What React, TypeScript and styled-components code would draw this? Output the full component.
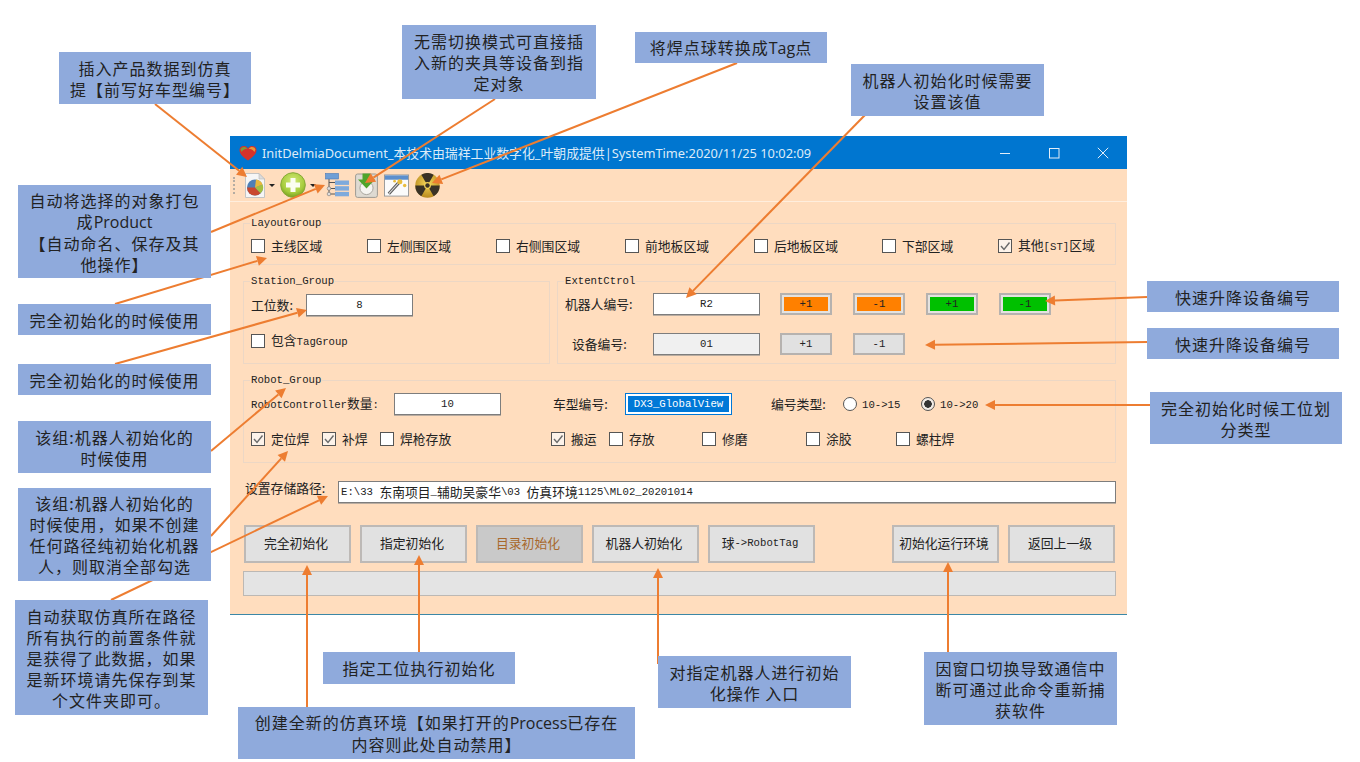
import React from "react";
import styled, { createGlobalStyle } from "styled-components";

const ORANGE = "#ED7D31";

type Note = { x: number; y: number; w: number; h: number; lines: string[] };

const notes: Note[] = [
    { x: 59, y: 52, w: 192, h: 52, lines: ["插入产品数据到仿真", "提【前写好车型编号】"] },
    { x: 402, y: 25, w: 194, h: 74, lines: ["无需切换模式可直接插", "入新的夹具等设备到指", "定对象"] },
    { x: 635, y: 32, w: 192, h: 31, lines: ["将焊点球转换成Tag点"] },
    { x: 851, y: 64, w: 193, h: 52, lines: ["机器人初始化时候需要", "设置该值"] },
    { x: 18, y: 185, w: 193, h: 93, lines: ["自动将选择的对象打包", "成Product", "【自动命名、保存及其", "他操作】"] },
    { x: 18, y: 304, w: 193, h: 31, lines: ["完全初始化的时候使用"] },
    { x: 18, y: 364, w: 193, h: 31, lines: ["完全初始化的时候使用"] },
    { x: 18, y: 421, w: 193, h: 52, lines: ["该组:机器人初始化的", "时候使用"] },
    { x: 18, y: 488, w: 193, h: 93, lines: ["该组:机器人初始化的", "时候使用，如果不创建", "任何路径纯初始化机器", "人，则取消全部勾选"] },
    { x: 15, y: 600, w: 193, h: 115, lines: ["自动获取仿真所在路径", "所有执行的前置条件就", "是获得了此数据，如果", "是新环境请先保存到某", "个文件夹即可。"] },
    { x: 323, y: 652, w: 192, h: 32, lines: ["指定工位执行初始化"] },
    { x: 238, y: 707, w: 397, h: 52, lines: ["创建全新的仿真环境【如果打开的Process已存在", "内容则此处自动禁用】"] },
    { x: 658, y: 656, w: 193, h: 52, lines: ["对指定机器人进行初始", "化操作 入口"] },
    { x: 924, y: 652, w: 193, h: 73, lines: ["因窗口切换导致通信中", "断可通过此命令重新捕", "获软件"] },
    { x: 1147, y: 281, w: 192, h: 31, lines: ["快速升降设备编号"] },
    { x: 1147, y: 328, w: 192, h: 31, lines: ["快速升降设备编号"] },
    { x: 1150, y: 392, w: 192, h: 52, lines: ["完全初始化时候工位划", "分类型"] },
];

// x1, y1 -> tip x2, y2
const arrows = [
    [155, 104, 247, 177],
    [495, 99, 365, 183],
    [737, 63, 432, 183],
    [865, 115, 686, 298],
    [211, 232, 325, 185],
    [115, 304, 267, 258],
    [115, 364, 307, 310],
    [211, 451, 286, 388],
    [211, 536, 288, 451],
    [111, 600, 328, 496],
    [419, 652, 419, 555],
    [307, 707, 307, 565],
    [658, 664, 658, 568],
    [948, 654, 948, 562],
    [1147, 297, 1045, 301],
    [1147, 342, 925, 345],
    [1150, 405, 985, 405],
];

// latin runs are half width like the old SimSun font, so they get a smaller size
const Txt = ({ t }: { t: string }) => (
    <>
        {t.split(/([\u0000-\u00ff]+)/).map((part, i) =>
            /^[\u0000-\u00ff]+$/.test(part) ? <Latin key={i}>{part}</Latin> : part
        )}
    </>
);

// callout text is spaced out, latin words in it are not
const NoteLine = ({ t }: { t: string }) => (
    <div>
        {t.split(/([A-Za-z]+)/).map((part, i) =>
            /^[A-Za-z]+$/.test(part) ? <NoteWord key={i}>{part}</NoteWord> : part
        )}
    </div>
);

const Arrow = ({ a }: { a: number[] }) => {
    const [x1, y1, x2, y2] = a;
    const len = Math.hypot(x2 - x1, y2 - y1);
    const ux = (x2 - x1) / len;
    const uy = (y2 - y1) / len;
    const bx = x2 - ux * 10;
    const by = y2 - uy * 10;
    const head = `${x2},${y2} ${bx - uy * 5},${by + ux * 5} ${bx + uy * 5},${by - ux * 5}`;
    return (
        <>
            <line x1={x1} y1={y1} x2={bx} y2={by} stroke={ORANGE} strokeWidth={2} />
            <polygon points={head} fill={ORANGE} />
        </>
    );
};

const Check = ({ label, on, w }: { label: string; on?: boolean; w?: number }) => (
    <CheckItem $w={w}>
        <CheckBox $on={on}>
            {on && (
                <svg width="12" height="12" viewBox="0 0 12 12">
                    <path d="M2 6 L5 9.5 L10.5 2.5" fill="none" stroke="#6a6a6a" strokeWidth="1.4" />
                </svg>
            )}
        </CheckBox>
        <span><Txt t={label} /></span>
    </CheckItem>
);

const Radio = ({ label, on, w }: { label: string; on?: boolean; w: number }) => (
    <CheckItem $w={w}>
        <RadioDot $on={on} />
        <span><Txt t={label} /></span>
    </CheckItem>
);

const HeartIcon = () => (
    <svg width="18" height="16" viewBox="0 0 18 16">
        <path d="M9 15.5 C4 12 .5 9 .5 5 C.5 2 3 .5 5.5 1 C7 1.3 8.3 2.2 9 3.4 C9.7 2.2 11 1.3 12.5 1 C15 .5 17.5 2 17.5 5 C17.5 9 14 12 9 15.5Z" fill="#d5322a" />
        <path d="M1.5 4.5 C3 1.5 6 1.4 8.4 3.8 C6 3.8 4 4.8 2.6 7Z" fill="#7f9a3a" />
        <path d="M16.5 4.5 C15 1.5 12 1.4 9.6 3.8 C12 3.8 14 4.8 15.4 7Z" fill="#e79a3a" />
    </svg>
);

const PieDocIcon = () => (
    <svg width="20" height="25" viewBox="0 0 20 25">
        <path d="M.5 .5 H14 L19.5 6 V24.5 H.5Z" fill="#f6f6f6" stroke="#c4c4c4" />
        <path d="M14 .5 V6 H19.5Z" fill="#dcdcdc" stroke="#b8b8b8" strokeWidth=".6" />
        <circle cx="10" cy="14.5" r="8" fill="#4f7fb5" />
        <path d="M10 14.5 L2 14.5 A8 8 0 0 0 10 22.5 A8 8 0 0 0 15.5 20.3Z" fill="#c9472f" />
        <path d="M10 14.5 L15.5 20.3 A8 8 0 0 0 17.6 11.5Z" fill="#a5c03f" />
        <path d="M10 14.5 L17.6 11.5 A8 8 0 0 0 11 6.6Z" fill="#e8b93c" />
    </svg>
);

const PlusIcon = () => (
    <svg width="26" height="26" viewBox="0 0 26 26">
        <defs>
            <radialGradient id="plusFill" cx="50%" cy="35%" r="65%">
                <stop offset="0%" stopColor="#d4ea7a" />
                <stop offset="70%" stopColor="#a6cc3c" />
                <stop offset="100%" stopColor="#78a022" />
            </radialGradient>
        </defs>
        <circle cx="13" cy="13" r="12.3" fill="url(#plusFill)" stroke="#86a838" />
        <path d="M10.5 6 H15.5 V10.5 H20 V15.5 H15.5 V20 H10.5 V15.5 H6 V10.5 H10.5Z" fill="#fbfdf0" />
    </svg>
);

const TreeIcon = () => (
    <svg width="24" height="24" viewBox="0 0 24 24">
        <path d="M4 6 V21 H10 M4 9.5 H10 M4 15.5 H10" fill="none" stroke="#555" strokeWidth="1" />
        <rect x=".5" y=".5" width="13" height="5.5" fill="#6f9fd6" stroke="#4a79b5" strokeWidth=".6" />
        <rect x="10" y="7.5" width="14" height="4.4" fill="#7eaadc" />
        <rect x="10" y="13.2" width="14" height="4.4" fill="#7eaadc" />
        <rect x="10" y="18.9" width="14" height="4.4" fill="#7eaadc" />
        <circle cx="4" cy="15.5" r="1.8" fill="#ddd" stroke="#777" strokeWidth=".6" />
        <circle cx="4" cy="21" r="1.8" fill="#ddd" stroke="#777" strokeWidth=".6" />
    </svg>
);

const SaveIcon = () => (
    <svg width="23" height="25" viewBox="0 0 23 25">
        <rect x=".6" y="1" width="21.8" height="23.4" rx="2" fill="#dedad2" stroke="#9d9a92" />
        <circle cx="11.5" cy="15" r="6.6" fill="#f6f5f1" stroke="#aaa79f" />
        <path d="M7.5 .5 H15.5 V6.5 H20 L11.5 15.5 L3 6.5 H7.5Z" fill="#4fa42a" />
    </svg>
);

const WandIcon = () => (
    <svg width="25" height="23" viewBox="0 0 26 23">
        <rect x=".5" y=".5" width="25" height="22" fill="#fbfbfb" stroke="#9a9a9a" />
        <rect x="1" y="1" width="24" height="4.5" fill="#5d8fcc" />
        <path d="M5 20 L15 9" stroke="#555" strokeWidth="3.2" />
        <path d="M5 20 L15 9" stroke="#d8d8d8" strokeWidth="1.2" />
        <circle cx="16.5" cy="7.5" r="2.6" fill="#e9bd3d" />
        <circle cx="21.5" cy="11.5" r="1.8" fill="#e9bd3d" />
        <circle cx="11" cy="7" r="1.4" fill="#e9bd3d" />
    </svg>
);

const RadiationIcon = () => (
    <svg width="25" height="25" viewBox="0 0 25 25">
        <defs>
            <radialGradient id="radFill" cx="50%" cy="40%" r="60%">
                <stop offset="0%" stopColor="#f5d75a" />
                <stop offset="100%" stopColor="#b98a1e" />
            </radialGradient>
        </defs>
        <circle cx="12.5" cy="12.5" r="12.2" fill="url(#radFill)" />
        <path d="M12.5 12.5 L6.3 1.8 A12.2 12.2 0 0 1 18.7 1.8Z" fill="#3a3226" />
        <path d="M12.5 12.5 L24.7 12.5 A12.2 12.2 0 0 1 18.7 23.2Z" fill="#3a3226" />
        <path d="M12.5 12.5 L6.3 23.2 A12.2 12.2 0 0 1 .3 12.5Z" fill="#3a3226" />
        <circle cx="12.5" cy="12.5" r="3.4" fill="#f2d257" />
        <circle cx="12.5" cy="12.5" r="2.2" fill="#3a3226" />
    </svg>
);

export default function App() {
    return (
        <Page>
            <GlobalStyle />

            <Window>
                <TitleBar>
                    <HeartIcon />
                    <TitleText>InitDelmiaDocument_本技术由瑞祥工业数字化_叶朝成提供|SystemTime:2020/11/25 10:02:09</TitleText>
                    <WinButton>
                        <svg width="12" height="12" viewBox="0 0 12 12"><path d="M1 6.5 H11" stroke="#e4eef8" /></svg>
                    </WinButton>
                    <WinButton>
                        <svg width="12" height="12" viewBox="0 0 12 12"><rect x="1.5" y="1.5" width="9.5" height="9.5" fill="none" stroke="#e4eef8" /></svg>
                    </WinButton>
                    <WinButton>
                        <svg width="12" height="12" viewBox="0 0 12 12"><path d="M.8 .8 L11.2 11.2 M11.2 .8 L.8 11.2" stroke="#e4eef8" /></svg>
                    </WinButton>
                </TitleBar>

                <Toolbar>
                    <Grip />
                    <PieDocIcon />
                    <Caret />
                    <PlusIcon />
                    <Caret $right={3} />
                    <TreeIcon />
                    <SaveIcon />
                    <WandIcon />
                    <RadiationIcon />
                </Toolbar>

                <Body>
                    <Group $h={42} $pad={11}>
                        <Legend>LayoutGroup</Legend>
                        <Row>
                            <Check label="主线区域" w={116} />
                            <Check label="左侧围区域" w={129} />
                            <Check label="右侧围区域" w={129} />
                            <Check label="前地板区域" w={129} />
                            <Check label="后地板区域" w={128} />
                            <Check label="下部区域" w={116} />
                            <Check label="其他[ST]区域" on />
                        </Row>
                    </Group>

                    <TwoGroups>
                        <Group $h={83} $w={307}>
                            <Legend>Station_Group</Legend>
                            <Row>
                                <Label $w={55}>工位数:</Label>
                                <TextBox $w={107}><Latin>8</Latin></TextBox>
                            </Row>
                            <Row $top={14}>
                                <Check label="包含TagGroup" />
                            </Row>
                        </Group>

                        <Group $h={83} $grow $pad={11}>
                            <Legend>ExtentCtrol</Legend>
                            <Row>
                                <Label $w={88}>机器人编号:</Label>
                                <TextBox $w={107}><Latin>R2</Latin></TextBox>
                                <StepButton $fill="#FF8000" $left={20}><Latin>+1</Latin></StepButton>
                                <StepButton $fill="#FF8000" $left={21}><Latin>-1</Latin></StepButton>
                                <StepButton $fill="#00C000" $left={21}><Latin>+1</Latin></StepButton>
                                <StepButton $fill="#00C000" $left={21}><Latin>-1</Latin></StepButton>
                            </Row>
                            <Row $top={18}>
                                <Label $w={88} $indent={7}>设备编号:</Label>
                                <TextBox $w={107} $bg="#f0f0f0"><Latin>01</Latin></TextBox>
                                <StepButton $left={20}><Latin>+1</Latin></StepButton>
                                <StepButton $left={21}><Latin>-1</Latin></StepButton>
                            </Row>
                        </Group>
                    </TwoGroups>

                    <Group $h={83}>
                        <Legend>Robot_Group</Legend>
                        <Row>
                            <Label $w={143}><Txt t="RobotController数量:" /></Label>
                            <TextBox $w={107}><Latin>10</Latin></TextBox>
                            <Label $w={72} $left={52}>车型编号:</Label>
                            <SelectedBox><Latin>DX3_GlobalView</Latin></SelectedBox>
                            <Label $w={72} $left={39}>编号类型:</Label>
                            <Radio label="10->15" w={78} />
                            <Radio label="10->20" on w={78} />
                        </Row>
                        <Row $top={13}>
                            <Check label="定位焊" on w={71} />
                            <Check label="补焊" on w={58} />
                            <Check label="焊枪存放" w={171} />
                            <Check label="搬运" on w={58} />
                            <Check label="存放" w={93} />
                            <Check label="修磨" w={104} />
                            <Check label="涂胶" w={90} />
                            <Check label="螺柱焊" />
                        </Row>
                    </Group>

                    <PathRow>
                        <PathLabel>设置存储路径:</PathLabel>
                        <TextBox $grow $left>
                            <Txt t="E:\33 东南项目_辅助吴豪华\03 仿真环境1125\ML02_20201014" />
                        </TextBox>
                    </PathRow>

                    <ActionRow>
                        <ActionButton>完全初始化</ActionButton>
                        <ActionButton>指定初始化</ActionButton>
                        <ActionButton $disabled>目录初始化</ActionButton>
                        <ActionButton>机器人初始化</ActionButton>
                        <ActionButton><Txt t="球->RobotTag" /></ActionButton>
                        <ActionSpacer />
                        <ActionButton>初始化运行环境</ActionButton>
                        <ActionButton>返回上一级</ActionButton>
                    </ActionRow>

                    <ProgressBar />
                </Body>
            </Window>

            <ArrowLayer width="1360" height="762" viewBox="0 0 1360 762">
                {arrows.map((a, i) => <Arrow key={i} a={a} />)}
            </ArrowLayer>

            {notes.map((n, i) => (
                <Callout key={i} $x={n.x} $y={n.y} $w={n.w} $h={n.h}>
                    {n.lines.map((line, j) => <NoteLine key={j} t={line} />)}
                </Callout>
            ))}
        </Page>
    );
}


const GlobalStyle = createGlobalStyle`
    html, body {
        margin: 0;
        padding: 0;
        background: #fff;
    }
    * {
        box-sizing: border-box;
    }
`

const Page = styled.div`
    position: relative;
    width: 1360px;
    height: 762px;
    overflow: hidden;
    background: #fff;
    font-family: "Noto Sans CJK SC", sans-serif;
`

const Window = styled.div`
    position: absolute;
    left: 230px;
    top: 136px;
    width: 897px;
    height: 479px;
    display: flex;
    flex-direction: column;
    background: #FFDDBE;
    border-bottom: 1px solid #3b87a6;
`

const TitleBar = styled.div`
    display: flex;
    align-items: center;
    height: 33px;
    flex: none;
    padding-left: 9px;
    background: #0076D0;
`

const TitleText = styled.div`
    flex: 1;
    margin-left: 5px;
    color: #dcebf8;
    font-family: "Noto Sans", "Noto Sans CJK SC", sans-serif;
    font-size: 12.85px;
    white-space: nowrap;
`

const WinButton = styled.div`
    width: 49px;
    height: 33px;
    display: flex;
    align-items: center;
    justify-content: center;
`

const Toolbar = styled.div`
    display: flex;
    align-items: center;
    gap: 6px;
    height: 33px;
    flex: none;
    padding-left: 3px;
    border-bottom: 1px solid #ffeedd;
`

const Grip = styled.div`
    width: 3px;
    height: 17px;
    margin-right: 3px;
    border-left: 2px dotted #b5aca2;
`

const Caret = styled.div<{ $right?: number }>`
    width: 0;
    height: 0;
    margin: 0 ${p => p.$right || -1}px 0 -2px;
    border-left: 3px solid transparent;
    border-right: 3px solid transparent;
    border-top: 3px solid #222;
`

const Body = styled.div`
    display: flex;
    flex-direction: column;
    padding: 21px 11px 0 13px;
    color: #222;
    font-size: 12.8px;
    line-height: 16px;
`

const TwoGroups = styled.div`
    display: flex;
    gap: 7px;
    margin: 16px 0;
`

const Group = styled.div<{ $h: number; $w?: number; $grow?: boolean; $pad?: number }>`
    position: relative;
    height: ${p => p.$h}px;
    width: ${p => (p.$w ? `${p.$w}px` : "auto")};
    flex: ${p => (p.$grow ? 1 : "none")};
    padding: ${p => p.$pad || 12}px 7px 0;
    border: 1px solid #ecd7c5;
`

const Legend = styled.div`
    position: absolute;
    left: 6px;
    top: -8px;
    padding: 0 1px;
    background: #FFDDBE;
    font-family: "Liberation Mono", monospace;
    font-size: 10.67px;
    line-height: 14px;
    white-space: nowrap;
`

const Latin = styled.span`
    font-family: "Liberation Mono", monospace;
    font-size: 10.67px;
`

const Row = styled.div<{ $top?: number }>`
    display: flex;
    align-items: center;
    height: 22px;
    margin-top: ${p => p.$top || 0}px;
    white-space: nowrap;
`

const Label = styled.div<{ $w: number; $left?: number; $indent?: number }>`
    width: ${p => p.$w}px;
    flex: none;
    margin-left: ${p => p.$left || 0}px;
    padding-left: ${p => p.$indent || 0}px;
`

const CheckItem = styled.label<{ $w?: number }>`
    display: flex;
    align-items: center;
    gap: 6px;
    flex: none;
    width: ${p => (p.$w ? `${p.$w}px` : "auto")};
`

const CheckBox = styled.span<{ $on?: boolean }>`
    width: 14px;
    height: 14px;
    flex: none;
    display: flex;
    align-items: center;
    justify-content: center;
    border: 1px solid #555;
    background: ${p => (p.$on ? "#fdf3ea" : "#fff")};
`

const RadioDot = styled.span<{ $on?: boolean }>`
    width: 14px;
    height: 14px;
    flex: none;
    margin-right: -1px;
    border: 1px solid #555;
    border-radius: 50%;
    background: ${p => (p.$on ? "radial-gradient(circle, #333 0 3.5px, #f2ece6 4px)" : "#fff")};
`

const TextBox = styled.div<{ $w?: number; $bg?: string; $grow?: boolean; $left?: boolean }>`
    width: ${p => (p.$w ? `${p.$w}px` : "auto")};
    height: 22px;
    flex: ${p => (p.$grow ? 1 : "none")};
    display: flex;
    align-items: center;
    justify-content: ${p => (p.$left ? "flex-start" : "center")};
    padding-left: ${p => (p.$left ? "2px" : "0")};
    white-space: pre;
    background: ${p => p.$bg || "#fff"};
    border: 1px solid #7d7d7d;
    box-shadow: 0 1px 0 #b9aca0;
`

const SelectedBox = styled.div`
    width: 107px;
    height: 22px;
    flex: none;
    display: flex;
    padding: 2px;
    background: #fff;
    border: 1px solid #0078D7;

    span {
        flex: 1;
        background: #0078D7;
        color: #fff;
        line-height: 16px;
        text-align: center;
    }
`

const StepButton = styled.div<{ $fill?: string; $left: number }>`
    width: 52px;
    height: 22px;
    flex: none;
    margin-left: ${p => p.$left}px;
    display: flex;
    align-items: center;
    justify-content: center;
    background: ${p => p.$fill || "#e1e1e1"};
    border: 2px solid #b6b2af;
    box-shadow: inset 0 0 0 2px ${p => (p.$fill ? "#e4e2e0" : "#e1e1e1")};
`

const PathRow = styled.div`
    display: flex;
    align-items: flex-start;
    margin-top: 18px;
`

const PathLabel = styled.div`
    width: 95px;
    flex: none;
    margin-top: -1px;
    padding-left: 2px;
    white-space: nowrap;
`

const ActionRow = styled.div`
    display: flex;
    gap: 9px;
    margin-top: 22px;
    padding: 0 1px;
`

const ActionSpacer = styled.div`
    flex: 1;
`

const ActionButton = styled.div<{ $disabled?: boolean }>`
    width: 107px;
    height: 38px;
    flex: none;
    display: flex;
    align-items: center;
    justify-content: center;
    padding: 0 3px 2px 0;
    white-space: nowrap;
    color: ${p => (p.$disabled ? "#a8682c" : "#222")};
    background: ${p => (p.$disabled ? "#c9c9c9" : "#e1e1e1")};
    border: 2px solid #bdb9b6;
`

const ProgressBar = styled.div`
    height: 25px;
    margin-top: 8px;
    background: #e4e4e4;
    border: 1px solid #bcb8b4;
`

const ArrowLayer = styled.svg`
    position: absolute;
    left: 0;
    top: 0;
    pointer-events: none;
`

const Callout = styled.div<{ $x: number; $y: number; $w: number; $h: number }>`
    position: absolute;
    left: ${p => p.$x}px;
    top: ${p => p.$y}px;
    width: ${p => p.$w}px;
    height: ${p => p.$h}px;
    display: flex;
    flex-direction: column;
    align-items: center;
    justify-content: center;
    padding-top: 1px;
    background: #8FAADC;
    color: #222;
    font-size: 16px;
    letter-spacing: 1px;
    line-height: 21px;
    white-space: nowrap;
`

const NoteWord = styled.span`
    font-family: "Open Sans", "Noto Sans CJK SC", sans-serif;
    letter-spacing: 0;
`
